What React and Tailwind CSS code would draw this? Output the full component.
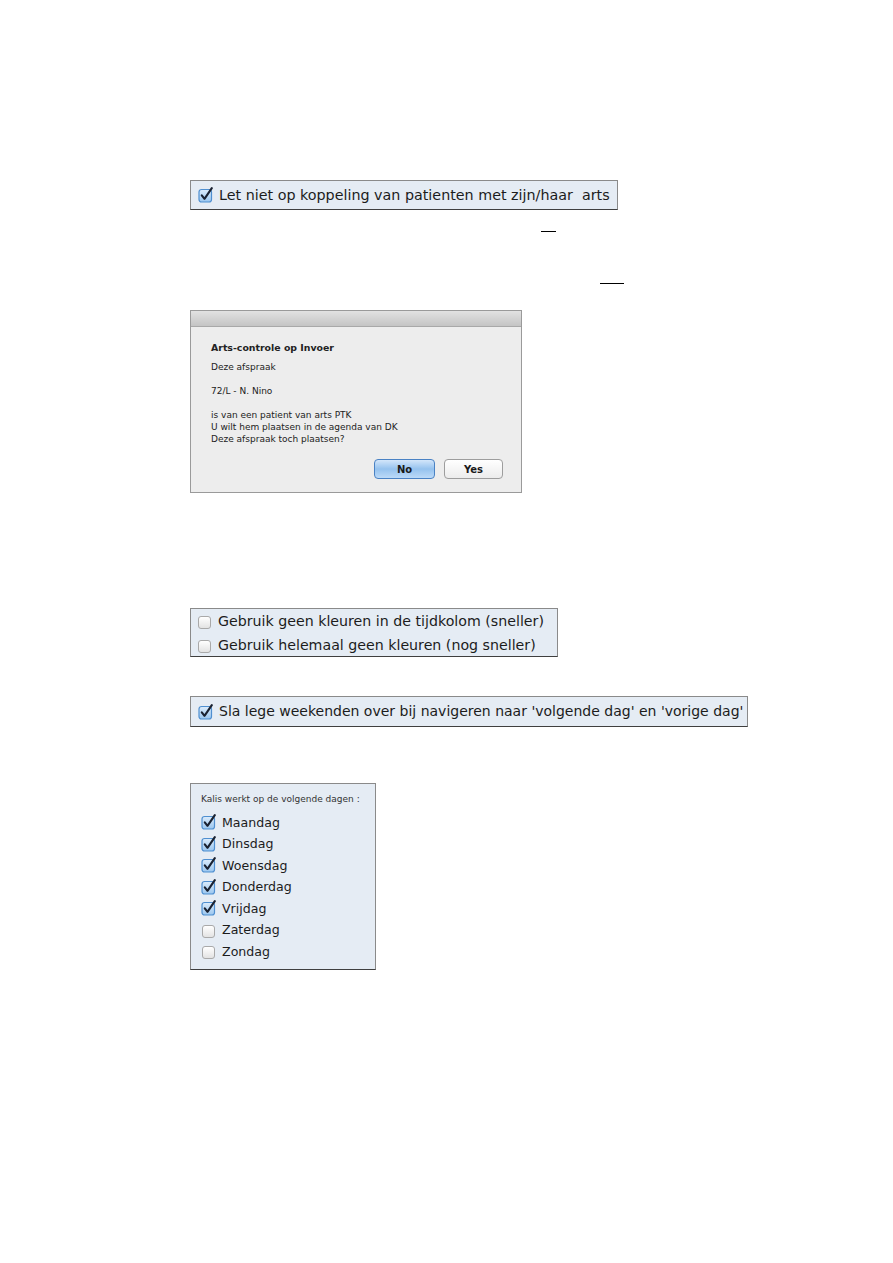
import React from 'react';

const font = { fontFamily: '"DejaVu Sans", "Liberation Sans", sans-serif' };

const CheckedBox = () => (
    <svg width="16" height="16" viewBox="0 0 16 16" className="shrink-0">
        <defs>
            <linearGradient id="cbfill" x1="0" y1="0" x2="0" y2="1">
                <stop offset="0" stopColor="#dcecfb" />
                <stop offset="1" stopColor="#9ac6ef" />
            </linearGradient>
        </defs>
        <rect x="1" y="2.5" width="12.5" height="12.5" rx="2.5" fill="url(#cbfill)" stroke="#4f8fd0" strokeWidth="1.2" />
        <path d="M3.8 8.4 L6.5 11.8 L13.8 1.2" fill="none" stroke="#1a2231" strokeWidth="2.1" strokeLinecap="round" strokeLinejoin="round" />
    </svg>
);

const EmptyBox = () => (
    <span className="w-[16px] h-[16px] flex items-end shrink-0">
        <span className="ml-[1px] w-[13px] h-[13px] rounded-[3px] border border-[#a9a9a9] bg-gradient-to-b from-[#ffffff] to-[#e3e3e3]" />
    </span>
);

const Panel = ({ className, children }) => (
    <div className={`bg-[#e5ecf4] border border-[#8a8a8a] border-b-[#3f3f3f] ${className}`}>{children}</div>
);

const Row = ({ checked, label, className = '' }) => (
    <div className={`flex items-center gap-[5px] text-[#1c1c1c] leading-[17px] ${className}`}>
        {checked ? <CheckedBox /> : <EmptyBox />}
        <span className="whitespace-pre">{label}</span>
    </div>
);

const days = [
    ['Maandag', true],
    ['Dinsdag', true],
    ['Woensdag', true],
    ['Donderdag', true],
    ['Vrijdag', true],
    ['Zaterdag', false],
    ['Zondag', false],
];

export default function App() {
    return (
        <div className="min-h-[1263px] w-[893px] bg-white pl-[190px] pt-[180px]" style={font}>
            {/* koppeling */}
            <Panel className="w-[428px] h-[30px] flex items-center pl-[7px] text-[14.3px]">
                <Row checked label="Let niet op koppeling van patienten met zijn/haar  arts" />
            </Panel>

            <div className="ml-[351px] mt-[21px] w-[15px] h-px bg-black" />
            <div className="ml-[410px] mt-[51px] w-[24px] h-px bg-black" />

            {/* dialog */}
            <div className="mt-[26px] w-[332px] h-[183px] border border-[#9a9a9a] bg-[#ededed] flex flex-col">
                <div className="h-[16px] bg-gradient-to-b from-[#e2e2e2] to-[#c4c4c4] border-b border-[#a8a8a8]" />
                <div className="flex-1 pl-[20px] pr-[18px] pt-[14px] text-[#222]">
                    <p className="text-[9.4px] font-bold">Arts-controle op Invoer</p>
                    <p className="text-[9px] mt-[6px]">Deze afspraak</p>
                    <p className="text-[9px] mt-[10px]">72/L - N. Nino</p>
                    <div className="text-[9px] mt-[11px] leading-[12px]">
                        <p>is van een patient van arts PTK</p>
                        <p>U wilt hem plaatsen in de agenda van DK</p>
                        <p>Deze afspraak toch plaatsen?</p>
                    </div>
                    <div className="flex justify-end gap-[9px] mt-[14px]">
                        <button className="w-[61px] h-[20px] rounded-[4px] border border-[#4a82c4] bg-gradient-to-b from-[#d3e6fa] via-[#95c2ee] to-[#bcdaf8] text-[10px] font-bold text-[#1a1a1a]">
                            No
                        </button>
                        <button className="w-[59px] h-[20px] rounded-[4px] border border-[#9d9d9d] bg-gradient-to-b from-[#ffffff] to-[#ececec] text-[10px] font-bold text-[#1a1a1a]">
                            Yes
                        </button>
                    </div>
                </div>
            </div>

            {/* kleuren */}
            <Panel className="mt-[115px] w-[368px] h-[49px] flex flex-col justify-center gap-[7px] pl-[6px] text-[14.2px]">
                <Row label="Gebruik geen kleuren in de tijdkolom (sneller)" className="mt-[1px]" />
                <Row label="Gebruik helemaal geen kleuren (nog sneller)" />
            </Panel>

            {/* weekenden */}
            <Panel className="mt-[39px] w-[558px] h-[31px] flex items-center pl-[7px] text-[14px]">
                <Row checked label="Sla lege weekenden over bij navigeren naar 'volgende dag' en 'vorige dag'" />
            </Panel>

            {/* werkdagen */}
            <Panel className="mt-[56px] w-[186px] h-[187px] pl-[10px] pt-[9px]">
                <p className="text-[9px] text-[#333]">Kalis werkt op de volgende dagen :</p>
                <div className="mt-[7px] flex flex-col gap-[4.5px] text-[12.6px]">
                    {days.map(([d, c]) => (
                        <Row key={d} checked={c} label={d} className="h-[17px]" />
                    ))}
                </div>
            </Panel>
        </div>
    );
}
